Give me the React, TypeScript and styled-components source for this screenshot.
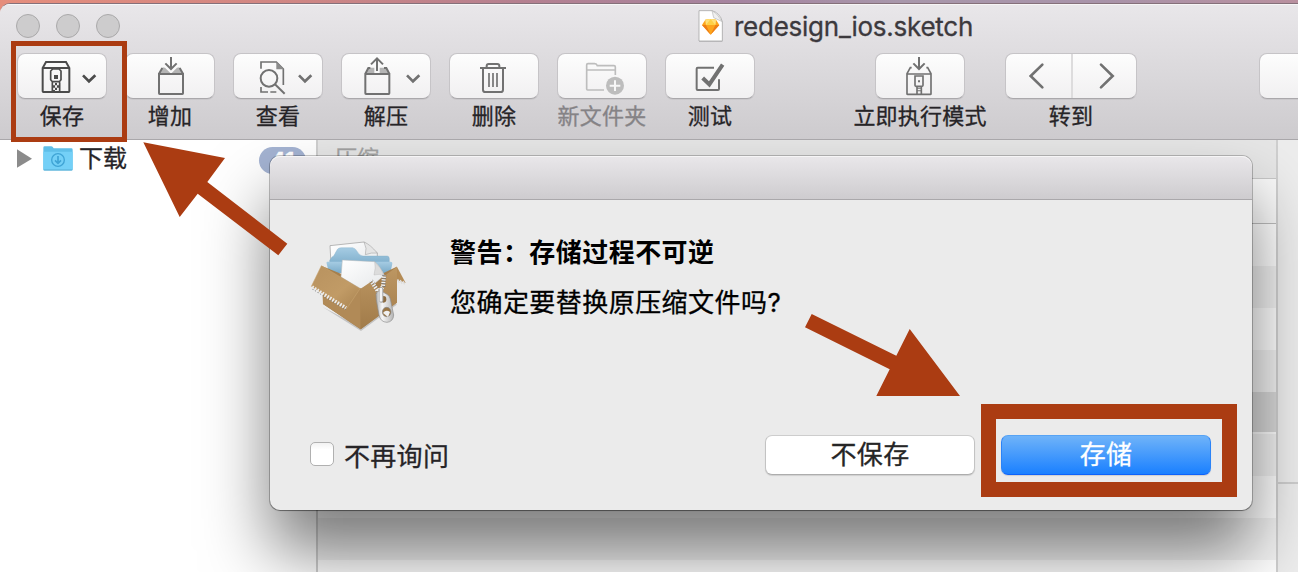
import React from "react";
import styled, { createGlobalStyle } from "styled-components";

const GlobalStyle = createGlobalStyle`
  * { box-sizing: border-box; }
  html, body { margin: 0; padding: 0; overflow: hidden; }
  body { font-family: Inter, "Noto Sans CJK SC", sans-serif; color: #262427; -webkit-text-stroke: 0.3px; }
  svg { display: block; }
`;

const accent = "#ab3c12";

const Desktop = styled.div`
  position: relative;
  width: 1298px;
  height: 572px;
  padding-top: 3px;
  overflow: hidden;
  background: linear-gradient(90deg, #e58d7c 0, #cf8684 300px, #b58090 520px, #a584a0 740px, #a897ab 900px, #a893a9 1100px, #b9909f 1298px);
`;

const Window = styled.div`
  display: flex;
  flex-direction: column;
  height: 569px;
  border-top: 1px solid #85707a;
  border-top-left-radius: 10px;
  overflow: hidden;
  background: #fff;
`;

const Header = styled.header`
  flex: none;
  height: 136px;
  border-bottom: 1px solid #a9a7aa;
  background: linear-gradient(#e9e7ea, #dcdadd 45%, #cdcbce);
  box-shadow: inset 0 1px 0 #f6f5f6;
`;

const TitleRow = styled.div`
  display: flex;
  height: 49px;
  padding-left: 16px;
`;

const Lights = styled.div`
  display: flex;
  gap: 16px;
  padding-top: 10px;
  width: 682px;
`;

const Light = styled.span`
  width: 24px;
  height: 24px;
  border-radius: 50%;
  border: 1px solid #aaa9aa;
  background: #cdcccd;
`;

const Title = styled.div`
  display: flex;
  align-items: center;
  gap: 10px;
  height: 45px;
  font-size: 26px;
  letter-spacing: -0.25px;
  color: #3c393d;
  white-space: nowrap;
`;

const Toolbar = styled.div`
  display: flex;
  gap: 18px;
  padding-left: 17px;
`;

const Item = styled.div<{ $width?: number; $before?: number; $dim?: boolean }>`
  display: flex;
  flex: none;
  flex-direction: column;
  align-items: center;
  width: ${(p) => p.$width ?? 90}px;
  margin-left: ${(p) => p.$before ?? 0}px;
  color: ${(p) => (p.$dim ? "#858386" : "#262427")};
`;

const Button = styled.div<{ $width?: number }>`
  display: flex;
  width: ${(p) => p.$width ?? 90}px;
  height: 46px;
  border: 1px solid #c6c4c7;
  border-bottom-color: #aaa8ab;
  border-radius: 8px;
  background: linear-gradient(#fdfdfd, #f1f0f1);
  box-shadow: 0 1px 0 rgba(0, 0, 0, 0.05);
  overflow: hidden;
`;

const Glyph = styled.svg<{ $tone?: string }>`
  flex: none;
  width: 90px;
  height: 46px;
  margin: -1px;
  fill: none;
  stroke: ${(p) => p.$tone ?? "#717171"};
  stroke-width: 6;
`;

const NavHalf = styled.div<{ $divided?: boolean }>`
  display: flex;
  align-items: center;
  justify-content: center;
  width: ${(p) => (p.$divided ? 67 : 63)}px;
  padding-right: ${(p) => (p.$divided ? 4 : 0)}px;
  border-right: ${(p) => (p.$divided ? "2px solid #dddcdd" : "none")};
`;

const Label = styled.span`
  margin-top: 2px;
  font-size: 22px;
  line-height: 30px;
  letter-spacing: 0.2px;
  white-space: nowrap;
`;

const Content = styled.div`
  display: flex;
  flex: 1;
  min-height: 0;
`;

const Sidebar = styled.aside`
  width: 318px;
  height: 100%;
  border-right: 2px solid #cfcfcf;
`;

const SidebarRow = styled.div`
  display: flex;
  align-items: center;
  height: 36px;
  padding-left: 17px;
  font-size: 24px;
`;

const FolderName = styled.span`
  width: 186px;
  padding: 0 0 4px 6px;
`;

const Badge = styled.span`
  width: 47px;
  height: 27px;
  margin-top: 4px;
  border-radius: 14px;
  background: #a4b3d2;
  color: #fff;
  font-size: 22px;
  font-weight: 700;
  line-height: 27px;
  text-align: center;
`;

const List = styled.main`
  display: flex;
  flex-direction: column;
  width: 958px;
`;

const ListHeading = styled.div`
  flex: none;
  height: 39px;
  padding-left: 17px;
  border-bottom: 1px solid #c8c8c8;
  background: #e6e6e6;
  color: #a2a2a2;
  font-size: 22px;
  line-height: 36px;
`;

const Columns = styled.div`
  flex: none;
  height: 45px;
  border-bottom: 1px solid #bdbdbd;
  background: #fafafa;
`;

const Stripe = styled.div<{ $tone: string; $height?: number }>`
  flex: none;
  height: ${(p) => p.$height ?? 42}px;
  background: ${(p) => p.$tone};
`;

const Inspector = styled.section`
  flex: 1;
  border-left: 2px solid #cfcfcf;
  background: #ededed;
`;

const Preview = styled.div`
  height: 344px;
  border-bottom: 2px solid #cecece;
`;

const ShadowClip = styled.div`
  position: absolute;
  inset: 140px 0 0 0;
  overflow: hidden;
`;

const Sheet = styled.div`
  position: absolute;
  left: 270px;
  top: 16px;
  width: 982px;
  height: 354px;
  border-radius: 10px;
  background: #ebebeb;
  box-shadow: 0 0 0 1px rgba(0, 0, 0, 0.22), 0 1px 1px rgba(0, 0, 0, 0.3), 0 42px 66px rgba(0, 0, 0, 0.51);
`;

const SheetBar = styled.div`
  height: 44px;
  border-bottom: 1px solid #aaa8ab;
  border-radius: 10px 10px 0 0;
  background: linear-gradient(#e9e7ea, #cecccf);
  box-shadow: inset 0 1px 0 #f6f5f6;
`;

const SheetMessage = styled.div`
  display: flex;
  gap: 40px;
  height: 233px;
  padding: 33px 0 0 40px;
`;

const AppIcon = styled.svg`
  width: 100px;
  height: 100px;
  margin-top: 5px;
`;

const Message = styled.div`
  color: #000;
`;

const Heading = styled.h1`
  margin: 0 0 10px;
  font-size: 26px;
  font-weight: 700;
  line-height: 40px;
  letter-spacing: 0.45px;
  -webkit-text-stroke: 0;
`;

const Question = styled.p`
  margin: 0;
  font-size: 26px;
  line-height: 40px;
  letter-spacing: 0.45px;
`;

const SheetActions = styled.div`
  display: flex;
  height: 44px;
  padding: 2px 0 0 40px;
  font-size: 26px;
  letter-spacing: 0.3px;
`;

const Ask = styled.label`
  display: flex;
  align-items: center;
  gap: 10px;
  width: 455px;
  height: 38px;
`;

const Check = styled.span`
  width: 24px;
  height: 24px;
  border: 1px solid #b0b0b0;
  border-radius: 5px;
  background: linear-gradient(#f2f2f2, #fff 30%);
`;

const Choice = styled.div<{ $primary?: boolean }>`
  width: 210px;
  height: 40px;
  margin-right: 26px;
  border: 1px solid ${(p) => (p.$primary ? "#2b83f7" : "#c3c3c3")};
  border-top-color: ${(p) => (p.$primary ? "#57a3f4" : "#cdcdcd")};
  border-bottom-color: ${(p) => (p.$primary ? "#0d62fb" : "#adadad")};
  border-radius: 7px;
  background: ${(p) => (p.$primary ? "linear-gradient(#6fb3f9, #1a80ff)" : "#fff")};
  color: ${(p) => (p.$primary ? "#fff" : "#262626")};
  box-shadow: 0 1px 1px rgba(0, 0, 0, 0.12);
  text-align: center;
  line-height: 38px;
`;

const Frame = styled.div<{ $x: number; $y: number; $w: number; $h: number; $line: number }>`
  position: absolute;
  left: ${(p) => p.$x}px;
  top: ${(p) => p.$y}px;
  width: ${(p) => p.$w}px;
  height: ${(p) => p.$h}px;
  border: ${(p) => p.$line}px solid ${accent};
`;

const Arrows = styled.svg`
  position: absolute;
  inset: 0;
`;

const Chevron = () => <path d="M198 67L216 85L235 67" strokeWidth="8" />;

const SaveIcon = () => (
  <Glyph viewBox="0 0 270 138" $tone="#4b4b4b">
    <path d="M77 115V45L87 27H147L157 45V115Q157 117 155 117H79Q77 117 77 115ZM77 45H157" />
    <path d="M101 54V80L106 86H127L132 80V54L126 48H107ZM106 88V118M128 88V118" strokeWidth="5" />
    <g fill="#4b4b4b" stroke="none">
      <rect x="111" y="66" width="12" height="12" />
      <path d="M114 90h6v7h-6zM108 97h6v7h-6zM120 97h6v7h-6zM114 104h6v7h-6zM108 111h6v7h-6z" />
    </g>
    <Chevron />
  </Glyph>
);

const AddIcon = () => (
  <Glyph viewBox="0 0 270 138">
    <path d="M102 62L113 43L120 44L136 60V62ZM174 62L163 43L156 44L140 60V62Z" fill="#b4b4b4" stroke="none" />
    <path d="M102 63H174V121Q174 123 172 123H104Q102 123 102 121ZM102 62L112 45M174 62L164 45" />
    <path d="M138 12V47M121 31L138 48L155 31" />
  </Glyph>
);

const ViewIcon = () => (
  <Glyph viewBox="0 0 270 138">
    <path d="M84 47V27H130L151 48V96M84 102V117H105M112 117H130" strokeWidth="5" />
    <path d="M130 26L153 49H130Z" fill="#8c8c8c" stroke="none" />
    <circle cx="108" cy="76" r="25" />
    <path d="M126 94L155 122" />
    <Chevron />
  </Glyph>
);

const ExtractIcon = () => (
  <Glyph viewBox="0 0 270 138">
    <path d="M82 44H100V60H74ZM116 44H134L142 60H116Z" fill="#b4b4b4" stroke="none" />
    <path d="M73 63H145V121Q145 123 143 123H75Q73 123 73 121ZM73 62L82 45H88M145 62L136 45H129" />
    <path d="M108 54V17M90 34L108 16L126 34" />
    <Chevron />
  </Glyph>
);

const DeleteIcon = () => (
  <Glyph viewBox="0 0 270 138">
    <path d="M93 45H171M113 45V39Q113 33 119 33H145Q151 33 151 39V45M102 45V110Q102 117 109 117H155Q162 117 162 110V45" />
    <path d="M120 60V102M132 60V102M144 60V102" strokeWidth="5" />
  </Glyph>
);

const NewFolderIcon = () => (
  <Glyph viewBox="0 0 270 138" $tone="#bdbdbd">
    <path d="M141 111H92Q89 111 89 108V36Q89 32 93 32H113Q119 32 121 38H171Q175 38 175 42V66M89 51H175" strokeWidth="5" />
    <circle cx="174" cy="98" r="27" fill="#bdbdbd" stroke="none" />
    <path d="M158 98H190M174 82V114" stroke="#f7f7f7" />
  </Glyph>
);

const TestIcon = () => (
  <Glyph viewBox="0 0 270 138">
    <path d="M147 44H98Q95 44 95 47V108Q95 111 98 111H159Q162 111 162 108V79" />
    <path d="M113 75L133 94L173 35" strokeWidth="12" />
  </Glyph>
);

const RunIcon = () => (
  <Glyph viewBox="0 0 270 138">
    <path d="M96 63H168V122Q168 124 166 124H98Q96 124 96 122ZM96 62L106 44H110M168 62L158 44H154" strokeWidth="5" />
    <path d="M132 12V47M115 31L132 48L149 31" />
    <path d="M120 69V97Q120 100 123 100H141Q144 100 144 97V69ZM126 101V124M139 101V124" strokeWidth="5" />
    <path d="M129 82h6v6h-6zM126 104h13v3h-13zM126 112h13v3h-13z" fill="#717171" stroke="none" />
  </Glyph>
);

const SketchFile = () => (
  <svg width="26" height="34" viewBox="0 0 78 102">
    <path d="M3 4H42L73 35V96H3Z" fill="#999" opacity=".45" />
    <path d="M3 2H42Q66 9 73 35V93H3Z" fill="#fff" stroke="#a9a9a9" strokeWidth="2.5" />
    <path d="M42 2L47 23L73 35L56 12Z" fill="#efefef" stroke="#b8b8b8" strokeWidth="2" />
    <path d="M22 29L38 27L54 29L64 45L38 74L12 45Z" fill="#fda51c" />
    <path d="M22 29L38 27L54 29L52 45H24Z" fill="#fed046" />
    <path d="M12 45H24L38 74ZM64 45H52L38 74Z" fill="#ee7d15" />
    <path d="M22 29L38 27L24 45ZM54 29L38 27L52 45Z" fill="#ffe07a" />
  </svg>
);

const DownloadFolder = () => (
  <svg width="30" height="25" viewBox="0 0 90 75">
    <path d="M1 5Q1 1 5 1H25Q29 1 32 7H85Q89 7 89 11V69Q89 73 85 73H5Q1 73 1 69Z" fill="#5fbfe9" />
    <path d="M1 17H89V69Q89 73 85 73H5Q1 73 1 69Z" fill="#74d0f7" />
    <path d="M2 72H88" stroke="#55acd2" strokeWidth="3" />
    <circle cx="45" cy="42" r="19" fill="none" stroke="#3fa4d5" strokeWidth="4" />
    <path d="M45 30V51M36 43L45 52L54 43" fill="none" stroke="#3fa4d5" strokeWidth="5" />
  </svg>
);

const ArchiveBox = () => (
  <AppIcon viewBox="60 55 300 300">
    <defs>
      <linearGradient id="flap" x1="0" y1="0" x2="1" y2="1">
        <stop offset="0" stopColor="#b8925f" />
        <stop offset=".6" stopColor="#c19b66" />
        <stop offset="1" stopColor="#a98350" />
      </linearGradient>
      <linearGradient id="side" x1="0" y1="0" x2="0" y2="1">
        <stop offset="0" stopColor="#bd9763" />
        <stop offset="1" stopColor="#a17b49" />
      </linearGradient>
      <linearGradient id="blue" x1="0" y1="0" x2="0" y2="1">
        <stop offset="0" stopColor="#a6cce3" />
        <stop offset="1" stopColor="#7aabc9" />
      </linearGradient>
      <linearGradient id="paper" x1="0" y1="0" x2="1" y2="1">
        <stop offset="0" stopColor="#fff" />
        <stop offset="1" stopColor="#e6e8ea" />
      </linearGradient>
      <linearGradient id="metal">
        <stop offset="0" stopColor="#b0b0b0" />
        <stop offset=".35" stopColor="#f6f6f6" />
        <stop offset="1" stopColor="#b4b4b4" />
      </linearGradient>
    </defs>
    <path d="M98 262L213 334L320 255L316 246L212 322Z" fill="#777" opacity=".35" />
    <path d="M120 78L222 67L262 100V150H124Z" fill="url(#paper)" stroke="#999" strokeWidth="2" />
    <path d="M222 67Q240 74 262 100Q244 98 226 105Q232 86 222 67Z" fill="#e5e5e5" stroke="#aaa" strokeWidth="2" />
    <path d="M119 122L126 112Q133 109 137 98L143 88Q147 84 154 84H188Q196 85 202 96Q208 108 219 109H292Q298 110 298 117V140H119Z" fill="url(#blue)" stroke="#7ba9c5" />
    <path d="M111 126H302Q308 126 307 132L301 160H117L110 132Q109 126 111 126Z" fill="url(#blue)" />
    <path d="M320 140L347 190L321 181Z" fill="#b48b55" />
    <path d="M323 179L328 190M331 181L336 192M339 184L344 194" stroke="#ddd" strokeWidth="4" />
    <path d="M94 138L160 165H270L320 141V248L212 329L99 253Z" fill="#a67f4c" />
    <path d="M157 121L254 126Q272 142 283 167L250 195L212 207L153 172Z" fill="url(#paper)" stroke="#b8b8b8" strokeWidth="1.5" />
    <path d="M254 126Q273 143 283 168Q268 161 252 166Q258 145 254 126Z" fill="#dcdcdc" stroke="#aaa" />
    <path d="M99 218L212 205V329L99 253Z" fill="#b18a57" />
    <path d="M211 208L246 184L266 212L284 168L321 141V249L212 329Z" fill="url(#side)" />
    <path d="M94 138L210 207L170 267L64 200Z" fill="url(#flap)" stroke="#cba673" strokeWidth="1.5" />
    <path d="M66 207L168 270" stroke="#6f6f6f" strokeWidth="3" strokeDasharray="5 4" />
    <path d="M66 202L168 265" stroke="#ececec" strokeWidth="11" strokeDasharray="5 4" />
    <path d="M243 183L266 218L280 202L283 166" fill="none" stroke="#777" strokeWidth="12" strokeDasharray="4 4" />
    <path d="M242 182L265 216L279 201L282 166" fill="none" stroke="#f2f2f2" strokeWidth="12" strokeDasharray="4 4" />
    <g>
      <path d="M258 224Q261 212 273 214L291 224Q299 228 301 238L311 286Q310 306 291 308Q271 307 267 286L259 240Z" fill="url(#metal)" stroke="#8c8c8c" strokeWidth="2" />
      <ellipse cx="281" cy="239" rx="8" ry="10" fill="#8c6b40" />
      <ellipse cx="290" cy="277" rx="13" ry="14" fill="#9a7645" stroke="#858585" strokeWidth="2" />
      <path d="M279 280Q288 268 300 277L294 292Z" fill="#f0f0f0" />
      <path d="M274 208V243" stroke="#a0a0a0" strokeWidth="12" strokeLinecap="round" />
      <path d="M273 208V242" stroke="#f4f4f4" strokeWidth="8" strokeLinecap="round" />
    </g>
  </AppIcon>
);

const NavArrow = ({ d }: { d: string }) => (
  <svg width="20" height="28" viewBox="0 0 60 84" fill="none" stroke="#717171" strokeWidth="8" strokeLinecap="round">
    <path d={d} />
  </svg>
);

const tools = [
  { label: "保存", icon: <SaveIcon /> },
  { label: "增加", icon: <AddIcon /> },
  { label: "查看", icon: <ViewIcon /> },
  { label: "解压", icon: <ExtractIcon /> },
  { label: "删除", icon: <DeleteIcon /> },
  { label: "新文件夹", icon: <NewFolderIcon />, dim: true },
  { label: "测试", icon: <TestIcon /> },
];

export default function App() {
  return (
    <Desktop>
      <GlobalStyle />
      <Window>
        <Header>
          <TitleRow>
            <Lights>
              <Light />
              <Light />
              <Light />
            </Lights>
            <Title>
              <SketchFile />
              <span>redesign_ios.sketch</span>
            </Title>
          </TitleRow>
          <Toolbar>
            {tools.map((t) => (
              <Item key={t.label} $dim={t.dim}>
                <Button>{t.icon}</Button>
                <Label>{t.label}</Label>
              </Item>
            ))}
            <Item $width={132} $before={81}>
              <Button>
                <RunIcon />
              </Button>
              <Label>立即执行模式</Label>
            </Item>
            <Item $width={132} $before={1}>
              <Button $width={132}>
                <NavHalf $divided>
                  <NavArrow d="M46 8L11 42L46 76" />
                </NavHalf>
                <NavHalf>
                  <NavArrow d="M18 8L53 42L18 76" />
                </NavHalf>
              </Button>
              <Label>转到</Label>
            </Item>
            <Item $before={104}>
              <Button />
            </Item>
          </Toolbar>
        </Header>
        <Content>
          <Sidebar>
            <SidebarRow>
              <svg width="26" height="20" viewBox="0 0 78 60">
                <path d="M0 4L45 32L0 59Z" fill="#8b8b8b" />
              </svg>
              <DownloadFolder />
              <FolderName>下载</FolderName>
              <Badge>41</Badge>
            </SidebarRow>
          </Sidebar>
          <List>
            <ListHeading>压缩</ListHeading>
            <Columns />
            <Stripe $tone="#fff" />
            <Stripe $tone="#f3f3f3" />
            <Stripe $tone="#fff" />
            <Stripe $tone="#f3f3f3" />
            <Stripe $tone="#dadada" $height={40} />
            <Stripe $tone="#fff" $height={2} />
            <Stripe $tone="#f3f3f3" />
            <Stripe $tone="#fff" />
            <Stripe $tone="#f3f3f3" />
            <Stripe $tone="#fff" />
          </List>
          <Inspector>
            <Preview />
          </Inspector>
        </Content>
      </Window>
      <ShadowClip>
        <Sheet>
          <SheetBar />
          <SheetMessage>
            <ArchiveBox />
            <Message>
              <Heading>警告：存储过程不可逆</Heading>
              <Question>您确定要替换原压缩文件吗?</Question>
            </Message>
          </SheetMessage>
          <SheetActions>
            <Ask>
              <Check />
              <span>不再询问</span>
            </Ask>
            <Choice>不保存</Choice>
            <Choice $primary>存储</Choice>
          </SheetActions>
        </Sheet>
      </ShadowClip>
      <Frame $x={11} $y={41} $w={116} $h={101} $line={5} />
      <Frame $x={981} $y={404} $w={256} $h={93} $line={15} />
      <Arrows width="1298" height="572" fill={accent}>
        <path d="M143.3 142.3L225 158L207.3 182L287.3 243.7L278.3 255.3L197.7 193.7L179.7 217Z" />
        <path d="M811.7 314L896.3 355.7L909.7 329L960 396H876.3L889.7 369.3L805 327.3Z" />
      </Arrows>
    </Desktop>
  );
}
